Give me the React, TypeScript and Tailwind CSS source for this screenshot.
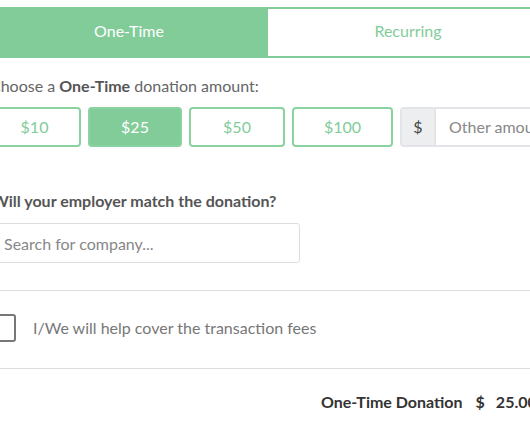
import { useState } from "react";

const amounts = [
  { label: "$10", w: "w-[93px]" },
  { label: "$25", w: "w-[94px]" },
  { label: "$50", w: "w-[96px]" },
  { label: "$100", w: "w-[101px]" },
];

export default function App() {
  const [tab, setTab] = useState("one");
  const [amount, setAmount] = useState("$25");
  const [cover, setCover] = useState(false);

  return (
    <div className="w-[530px] h-[442px] overflow-hidden bg-white font-['Lato','Liberation_Sans',sans-serif]">
      <div className="ml-[-12px] w-[580px] pt-[7px]">
        {/* tabs */}
        <div className="flex h-[51px] border-2 border-[#82cc9a]">
          <button
            onClick={() => setTab("one")}
            className={`w-[278px] shrink-0 flex items-center justify-center pb-[3px] text-[16px] ${tab === "one" ? "bg-[#82cc9a] text-white" : "text-[#82cc9a]"}`}
          >
            One-Time
          </button>
          <button
            onClick={() => setTab("rec")}
            className={`w-[280px] shrink-0 flex items-center justify-center pb-[3px] text-[16px] ${tab === "rec" ? "bg-[#82cc9a] text-white" : "text-[#82cc9a]"}`}
          >
            Recurring
          </button>
        </div>

        <p className="mt-[16px] ml-[2px] text-[16px] leading-[24px] text-[#666]">
          Choose a <span className="font-bold text-[#555]">One-Time</span> donation amount:
        </p>

        <div className="mt-[9px] flex gap-[7px] h-[40px]">
          {amounts.map((a) => (
            <button
              key={a.label}
              onClick={() => setAmount(a.label)}
              className={`${a.w} shrink-0 h-[40px] rounded-[4px] border-2 border-[#8ad2a0] text-[16px] ${amount === a.label ? "bg-[#82cc9a] text-white" : "bg-white text-[#82cc9a]"}`}
            >
              {a.label}
            </button>
          ))}
          <div className="flex shrink-0 h-[40px] w-[200px] rounded-[4px] border-2 border-[#e2e4e7] overflow-hidden">
            <span className="w-[34px] shrink-0 flex items-center justify-center bg-[#eceef0] border-r-2 border-[#e2e4e7] text-[16px] text-[#444]">$</span>
            <input
              placeholder="Other amount"
              className="flex-1 min-w-0 pl-[13px] text-[16px] text-[#444] placeholder:text-[#888] outline-none"
            />
          </div>
        </div>

        <p className="mt-[42px] ml-[4px] text-[16px] leading-[24px] font-bold text-[#555]">
          Will your employer match the donation?
        </p>

        <input
          placeholder="Search for company..."
          className="mt-[10px] block w-[312px] h-[40px] rounded-[3px] border border-[#ddd] pl-[15px] text-[16px] text-[#444] placeholder:text-[#888] outline-none"
        />

        <div className="mt-[27px] border-t border-[#ddd]" />

        <label className="mt-[23px] flex items-center gap-[17px] cursor-pointer">
          <span
            onClick={() => setCover(!cover)}
            className={`w-[28px] h-[28px] shrink-0 rounded-[3px] border-2 border-[#777] ${cover ? "bg-[#82cc9a]" : "bg-white"}`}
          />
          <span className="text-[16px] text-[#777]">I/We will help cover the transaction fees</span>
        </label>

        <div className="mt-[26px] border-t border-[#ddd]" />

        <div className="mt-[21px] pl-[333px] flex items-center text-[16px] leading-[24px] font-bold text-[#333] whitespace-nowrap">
          <span>One-Time Donation</span>
          <span className="ml-[13px]">$</span>
          <span className="ml-[11px]">25.00</span>
        </div>
      </div>
    </div>
  );
}
